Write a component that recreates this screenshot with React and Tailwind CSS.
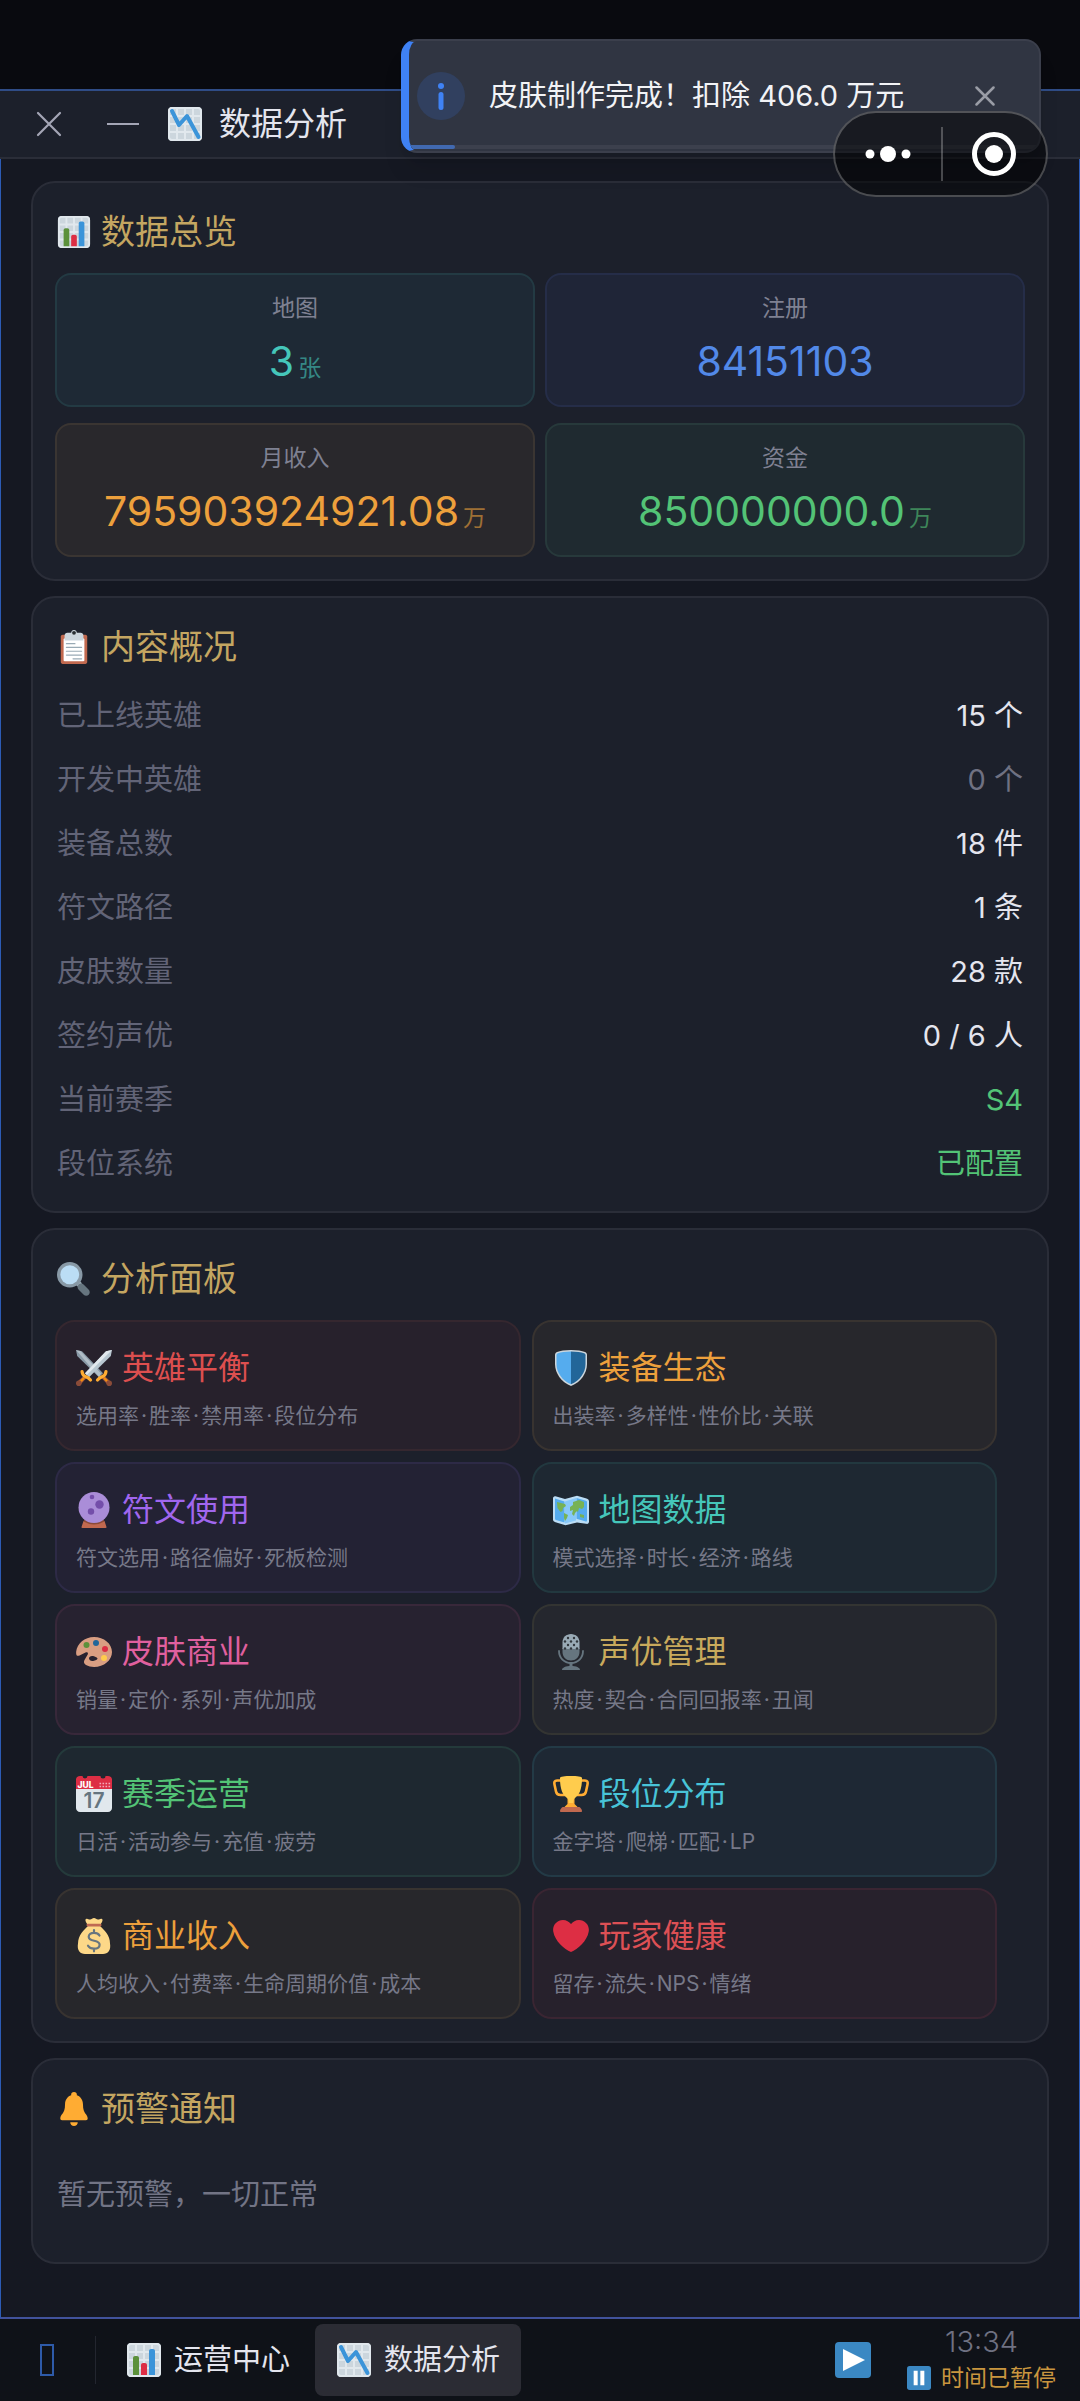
import { Fragment, useState } from 'react'

const GRID =
  'M31 1H5C2.791 1 1 2.791 1 5v26c0 2.209 1.791 4 4 4h26c2.209 0 4-1.791 4-4V5c0-2.209-1.791-4-4-4zm0 2c1.103 0 2 .897 2 2v4h-6V3h4zm-4 16h6v6h-6v-6zm0-2v-6h6v6h-6zM25 3v6h-6V3h6zm-6 8h6v6h-6v-6zm0 8h6v6h-6v-6zM17 3v6h-6V3h6zm-6 8h6v6h-6v-6zm0 8h6v6h-6v-6zM3 5c0-1.103.897-2 2-2h4v6H3V5zm0 6h6v6H3v-6zm0 8h6v6H3v-6zm2 14c-1.103 0-2-.897-2-2v-4h6v6H5zm6 0v-6h6v6h-6zm8 0v-6h6v6h-6zm12 0h-4v-6h6v4c0 1.103-.897 2-2 2z'

// Icon bodies, all on a 36x36 canvas.
const ICONS = {
  bars: (
    <>
      <rect x="1" y="1" width="34" height="34" rx="4" fill="#ccd6dd" />
      <path fill="#e1e8ed" d={GRID} />
      <path fill="#5c913b" d="M13 33H7V16c0-1.104.896-2 2-2h2c1.104 0 2 .896 2 2v17z" />
      <path fill="#3b94d9" d="M29 33h-6V9c0-1.104.896-2 2-2h2c1.104 0 2 .896 2 2v24z" />
      <path fill="#dd2e44" d="M21 33h-6V23c0-1.104.896-2 2-2h2c1.104 0 2 .896 2 2v10z" />
    </>
  ),
  trend: (
    <>
      <rect x="1" y="1" width="34" height="34" rx="4" fill="#ccd6dd" />
      <path fill="#e1e8ed" d={GRID} />
      <path d="M5 5l7 14 8-9 11.500 21" fill="none" stroke="#3b94d9" strokeWidth="4" strokeLinecap="round" strokeLinejoin="round" />
    </>
  ),
  clipboard: (
    <>
      <path fill="#c1694f" d="M32 34c0 1.104-.896 2-2 2H6c-1.104 0-2-.896-2-2V7c0-1.104.896-2 2-2h24c1.104 0 2 .896 2 2v27z" />
      <path fill="#fff" d="M29 32c0 .553-.447 1-1 1H8c-.552 0-1-.447-1-1V10c0-.552.448-1 1-1h20c.553 0 1 .448 1 1v22z" />
      <path fill="#ccd6dd" d="M25 3h-4c0-1.657-1.343-3-3-3s-3 1.343-3 3h-4c-1.657 0-3 1.343-3 3v5h20V6c0-1.657-1.343-3-3-3z" />
      <circle cx="18" cy="3" r="2" fill="#292f33" />
      <path d="M10 14.500h9M10 18.500h16M10 22.500h16M10 26.500h16M17 30.500h9" stroke="#99aab5" strokeWidth="1.300" strokeLinecap="round" />
    </>
  ),
  search: (
    <>
      <path fill="#9aaab4" d="M22.500 26.500l4-4-3.500-3.500-4 4z" />
      <path fill="#66757f" d="M33.600 34.600c-1.500 1.500-4 1.400-5.600-.2l-5-5c-1.600-1.600-1.700-4.100-.2-5.600s4-1.400 5.600.2l5 5c1.600 1.600 1.700 4.100.2 5.600z" />
      <circle cx="13.500" cy="13.500" r="13.500" fill="#8899a6" />
      <circle cx="13.500" cy="13.500" r="10" fill="#bbddf5" />
    </>
  ),
  swords: (
    <>
      <path fill="#8899a6" d="M0 0l6 1.200 21 22-4 4L1.200 6z" />
      <path fill="#ccd6dd" d="M0 0l4.500 1L25 23.500 23 27z" opacity=".6" />
      <path fill="#b7c6d0" d="M36 0l-6 1.200-21 22 4 4L34.800 6z" />
      <path fill="#e1e8ed" d="M36 0l-6 1.200L9 23.200l1.800 1.800z" />
      <path fill="#aa5a3c" d="M8 25.500l2.500 2.500-6 6.500-3-3zM28 25.500L25.500 28l6 6.500 3-3z" />
      <circle cx="2.800" cy="33.200" r="2.800" fill="#8a4b38" />
      <circle cx="33.200" cy="33.200" r="2.800" fill="#8a4b38" />
      <path d="M6 21.500q.5 4 3.500 5t5 3.500M30 21.500q-.5 4-3.500 5t-5 3.500" fill="none" stroke="#ffac33" strokeWidth="3.200" strokeLinecap="round" />
      <path d="M8 28l-3 3M28 28l3 3" stroke="#f4900c" strokeWidth="2" />
    </>
  ),
  shield: (
    <>
      <path fill="#ccd6dd" d="M18 0C12 0 7 .8 4 2 2.600 2.600 2 3.500 2 5v9c0 9 6 18 16 22 10-4 16-13 16-22V5c0-1.500-.6-2.400-2-3-3-1.200-8-2-14-2z" />
      <path fill="#55acee" d="M18 1.500C12 1.500 8 2.200 5 3.300c-1 .4-1.500 1-1.500 2V14c0 8.400 5.500 16.500 14.500 20.300z" />
      <path fill="#226699" d="M18 1.500c6 0 10 .7 13 1.800 1 .4 1.500 1 1.500 2V14c0 8.400-5.500 16.500-14.500 20.300z" />
    </>
  ),
  orb: (
    <>
      <path fill="#c1694f" d="M7.500 29h21l2 6c.2.600-.2 1-1 1h-23c-.8 0-1.200-.4-1-1z" />
      <path fill="#8a4b38" d="M7.500 29.500q10.500 6 21 0l-1-2.500h-19z" />
      <circle cx="18" cy="15.500" r="15.500" fill="#aa8dd8" />
      <circle cx="16" cy="5" r="2.300" fill="#744eaa" />
      <circle cx="23.500" cy="12.500" r="4.200" fill="#744eaa" />
      <circle cx="15" cy="19.500" r="3.200" fill="#744eaa" />
    </>
  ),
  map: (
    <>
      <path fill="#bbddf5" d="M0 6.500C0 5 1 4 2.500 4.300L12 7l12-3.300 9.500 2.800c1.600.5 2.500 1.400 2.500 3v20c0 1.900-1.200 2.800-3 2.300L24 30.500l-11.500 2.800-10-3C1 29.800 0 29 0 27.500z" />
      <path fill="#55acee" d="M2 6.500l9.500 3v21L3 28c-.7-.2-1-.6-1-1.300z" />
      <path fill="#88c9f9" d="M12 9.500L23 6v22.500l-11 3z" />
      <path fill="#55acee" d="M23.500 6L33 8.800c.7.200 1 .6 1 1.300v18.500c0 .8-.4 1.100-1.200.9l-9.300-2.800z" />
      <path fill="#77b255" d="M4 10l8 2 1 2-3 2-.500 3-2 1-3-4zM11 21l4 2-1 3-2 3-1-3zM17 15l3-2v-3l3-1 3-1 5 2v5l-2 2-3-1-1 4-1-1-2 2-1 3-2-2 1-4-3 1zM27 22l4 1v3l-4-1z" />
    </>
  ),
  palette: (
    <>
      <path fill="#d99e82" d="M18 3C8.600 3 1 9.500.2 17.600-.2 21.500 1 22.500 3.500 21.500l6-3c1.700-.7 3 .5 2.200 2l-3.200 5.500c-1 2-.6 3.500 1.500 5 2.300 1.300 5 2 8 2 9.900 0 18-6.700 18-15S27.900 3 18 3zm0 23.700c-2.500 1-5-.4-5-2.400s2.500-3 5-2 3.500 1.500 3.500 2.300-1 1.500-3.500 2.100z" />
      <circle cx="10.500" cy="11" r="3" fill="#5c913b" />
      <circle cx="20" cy="9" r="3" fill="#226699" />
      <circle cx="29" cy="15" r="3" fill="#dd2e44" />
      <circle cx="28" cy="24" r="3" fill="#ffcc4d" />
    </>
  ),
  mic: (
    <>
      <path d="M6 17c0 7 5 12 12 12s12-5 12-12" fill="none" stroke="#66757f" strokeWidth="1.800" strokeLinecap="round" />
      <path fill="#66757f" d="M9.500 14v4c0 5 4 8.500 8.500 8.500s8.500-3.500 8.500-8.500v-4zM16.500 28h3v4h-3zM9 36c0-2.500 4-4 9-4s9 1.500 9 4z" />
      <path fill="#99aab5" d="M18 0c-4.700 0-8.500 3.600-8.500 8v7h17V8c0-4.400-3.800-8-8.500-8z" />
      <g fill="#31373d">
        <circle cx="15" cy="4" r="1.200" /><circle cx="21" cy="4" r="1.200" />
        <circle cx="12" cy="7.500" r="1.200" /><circle cx="18" cy="7.500" r="1.200" /><circle cx="24" cy="7.500" r="1.200" />
        <circle cx="15" cy="11" r="1.200" /><circle cx="21" cy="11" r="1.200" />
        <circle cx="12" cy="14.500" r="1.200" /><circle cx="18" cy="14.500" r="1.200" /><circle cx="24" cy="14.500" r="1.200" />
      </g>
    </>
  ),
  calendar: (
    <>
      <path fill="#e1e8ed" d="M36 32c0 2.209-1.791 4-4 4H4c-2.209 0-4-1.791-4-4V9h36v23z" />
      <path fill="#dd2e44" d="M32 0h-2.500a2.500 2.500 0 0 1-5 0h-13a2.500 2.500 0 0 1-5 0H4C1.800 0 0 1.300 0 3.500V13h36V3.500C36 1.300 34.200 0 32 0z" />
      <path d="M23.500 7.500h12M23.500 10.500h12" stroke="#f4abba" strokeWidth="1.600" strokeDasharray="1.600 1.400" />
      <text x="1.500" y="11.600" fill="#fff" fontSize="8.500" fontWeight="800" fontFamily="Inter">JUL</text>
      <text x="18" y="32" fill="#66757f" fontSize="21" fontWeight="600" fontFamily="Inter" textAnchor="middle">17</text>
    </>
  ),
  trophy: (
    <>
      <path d="M9 4.500H4C1.500 4.500 1 6 1.500 8.500l1.500 7c.5 2.500 2 3.500 4.500 3.500H12M27 4.500h5c2.500 0 3 1.500 2.500 4l-1.500 7c-.5 2.500-2 3.500-4.500 3.500H24" fill="none" stroke="#ffac33" strokeWidth="2.600" />
      <path fill="#ffac33" d="M14.500 22h7v6l4 4h-15l4-4z" />
      <path fill="#ffcc4d" d="M7 2c0-1.400 5-2 11-2s11 .6 11 2c0 12-3 17-7 20-1.500 1.200-1.800 3-1.800 5h-4.400c0-2-.3-3.800-1.800-5C10 19 7 14 7 2z" />
      <path fill="#ffac33" d="M12 31c1-1.500 3.500-2 6-2s5 .5 6 2z" />
      <path fill="#c1694f" d="M10 31h16c1 0 3 2.500 3 4 0 .7-.5 1-1 1H8c-.5 0-1-.3-1-1 0-1.500 2-4 3-4z" />
    </>
  ),
  money: (
    <>
      <path fill="#fdd888" d="M11.500 6.500C9 3 9 1 10.500.7c1.500-.3 2 .8 3.500.8S16.500 0 18 0s2.500 1.500 4 1.500 2-1.100 3.500-.8C27 1 27 3 24.500 6.500z" />
      <path fill="#fdd888" d="M12 8c-4 4-10 9-10 17.500C.8 32 4 36 9 36h18c5 0 8.200-4 7-10.500C34 17 28 12 24 8z" />
      <rect x="10.500" y="5.800" width="15" height="2.600" rx="1.300" fill="#bf6952" />
      <path d="M23.500 17.500c-1-1.800-3-2.700-5.500-2.700-3.200 0-5.300 1.700-5.300 3.900 0 5.600 10.900 2.500 10.900 8 0 2.500-2.400 4-5.600 4-2.700 0-4.900-1.200-6-3M18 12v2.800M18 30.500v2.800" fill="none" stroke="#67757f" strokeWidth="2.200" strokeLinecap="round" />
    </>
  ),
  heart: (
    <path
      fill="#dd2e44"
      d="M35.885 11.833c0-5.450-4.418-9.868-9.867-9.868-3.308 0-6.227 1.633-8.018 4.129-1.791-2.496-4.710-4.129-8.017-4.129-5.450 0-9.868 4.417-9.868 9.868 0 .772.098 1.520.266 2.241C1.751 22.587 11.216 31.568 18 34.034c6.783-2.466 16.249-11.447 17.617-19.959.170-.721.268-1.469.268-2.242z"
    />
  ),
  bell: (
    <>
      <path fill="#ffac33" d="M27.500 13c0 11 5 10 5 15 0 0 0 2-2 2h-25c-2 0-2-2-2-2 0-5 5-4 5-15 0-5.500 4-10 9.500-10s9.500 4.500 9.500 10z" />
      <circle cx="18" cy="3" r="3" fill="#ffac33" />
      <path fill="#ffac33" d="M18 36c2.209 0 4-1.791 4-4h-8c0 2.209 1.791 4 4 4z" />
    </>
  ),
  play: (
    <>
      <rect width="36" height="36" rx="4" fill="#3b88c3" />
      <path fill="#fff" d="M8 7l22 11L8 29z" />
    </>
  ),
  pause: (
    <>
      <rect width="36" height="36" rx="4" fill="#3b88c3" />
      <path fill="#fff" d="M10 7h6v22h-6zM20 7h6v22h-6z" />
    </>
  ),
}

function Icon({ name, className }) {
  return (
    <svg viewBox="0 0 36 36" className={`shrink-0 ${className}`} aria-hidden="true">
      {ICONS[name]}
    </svg>
  )
}

const STATS = [
  { label: '地图', value: '3', unit: '张', box: 'bg-[#1e2935] border-[#233a43]', color: 'text-[#45c6ba]' },
  { label: '注册', value: '84151103', box: 'bg-[#1f2537] border-[#252d48]', color: 'text-[#5289e8]' },
  { label: '月收入', value: '795903924921.08', unit: '万', box: 'bg-[#29282c] border-[#3a3532]', color: 'text-[#eda03c]' },
  { label: '资金', value: '850000000.0', unit: '万', box: 'bg-[#1f2a30] border-[#27393b]', color: 'text-[#53c376]' },
]

const ROWS = [
  ['已上线英雄', '15 个', 'text-[#e4e5ee]'],
  ['开发中英雄', '0 个', 'text-[#6f7182]'],
  ['装备总数', '18 件', 'text-[#e4e5ee]'],
  ['符文路径', '1 条', 'text-[#e4e5ee]'],
  ['皮肤数量', '28 款', 'text-[#e4e5ee]'],
  ['签约声优', '0 / 6 人', 'text-[#e4e5ee]'],
  ['当前赛季', 'S4', 'text-[#53c376]'],
  ['段位系统', '已配置', 'text-[#53c376]'],
]

const PANELS = [
  { icon: 'swords', title: '英雄平衡', desc: '选用率·胜率·禁用率·段位分布', box: 'bg-[#27212c] border-[#35272f]', color: 'text-[#dd4f4f]' },
  { icon: 'shield', title: '装备生态', desc: '出装率·多样性·性价比·关联', box: 'bg-[#27272c] border-[#383330]', color: 'text-[#eda03c]' },
  { icon: 'orb', title: '符文使用', desc: '符文选用·路径偏好·死板检测', box: 'bg-[#232234] border-[#2d2a46]', color: 'text-[#a066ee]' },
  { icon: 'map', title: '地图数据', desc: '模式选择·时长·经济·路线', box: 'bg-[#1e2832] border-[#22383f]', color: 'text-[#45c6ba]' },
  { icon: 'palette', title: '皮肤商业', desc: '销量·定价·系列·声优加成', box: 'bg-[#272230] border-[#38283a]', color: 'text-[#e0609f]' },
  { icon: 'mic', title: '声优管理', desc: '热度·契合·合同回报率·丑闻', box: 'bg-[#25272e] border-[#333432]', color: 'text-[#c9aa5c]' },
  { icon: 'calendar', title: '赛季运营', desc: '日活·活动参与·充值·疲劳', box: 'bg-[#1e2830] border-[#243a3b]', color: 'text-[#53c376]' },
  { icon: 'trophy', title: '段位分布', desc: '金字塔·爬梯·匹配·LP', box: 'bg-[#1e2834] border-[#233a46]', color: 'text-[#48c4d8]' },
  { icon: 'money', title: '商业收入', desc: '人均收入·付费率·生命周期价值·成本', box: 'bg-[#27272b] border-[#383330]', color: 'text-[#eda03c]' },
  { icon: 'heart', title: '玩家健康', desc: '留存·流失·NPS·情绪', box: 'bg-[#27212c] border-[#3a2532]', color: 'text-[#dd5055]' },
]

function Section({ icon, title, children }) {
  return (
    <section className="rounded-3xl border-2 border-[#2a2d38] bg-[#1c202b] p-[22px]">
      <h2 className="flex items-center gap-2.5 px-0.5 text-[34px] leading-[54px] text-[#c4a661]">
        <Icon name={icon} className="size-[34px]" />
        {title}
      </h2>
      {children}
    </section>
  )
}

// Topic list with a little air around each middle dot.
function Topics({ text }) {
  return text.split('·').map((part, i) => (
    <Fragment key={part}>
      {i > 0 && <span className="mx-0.5">·</span>}
      {part}
    </Fragment>
  ))
}

function Toast({ onClose }) {
  return (
    <div
      role="status"
      className="absolute top-[39px] right-[39px] flex h-[114px] w-[640px] items-center overflow-hidden rounded-2xl border-2 border-l-8 border-[#3b3f4c] border-l-[#3f82f5] bg-[#303542] pl-2 shadow-xl"
    >
      <svg viewBox="0 0 48 48" className="size-12 shrink-0" aria-hidden="true">
        <circle cx="24" cy="24" r="24" fill="#31405f" />
        <circle cx="24" cy="14" r="3" fill="#3f82f5" />
        <rect x="21.500" y="20" width="5" height="18" rx="2.500" fill="#3f82f5" />
      </svg>
      <p className="grow pl-6 text-[29px] whitespace-nowrap text-[#f2f3f6]">皮肤制作完成！扣除 406.0 万元</p>
      <button type="button" aria-label="关闭通知" onClick={onClose} className="mr-11 shrink-0 text-[#999ca5]">
        <svg viewBox="0 0 20 20" className="size-5" fill="none" stroke="currentColor" strokeWidth="2.500" strokeLinecap="round">
          <path d="M1.500 1.500l17 17M18.500 1.500l-17 17" />
        </svg>
      </button>
      <div className="absolute inset-x-0 bottom-0.5 h-1 bg-[#3c404d]">
        <div className="h-full w-[46px] rounded-r bg-[#4169b0]" />
      </div>
    </div>
  )
}

// Host app capsule: menu dots on the left, exit target on the right.
function Capsule() {
  return (
    <div className="absolute top-[111px] right-8 flex h-[86px] w-[215px] items-center rounded-full border-2 border-white/25 bg-black/50">
      <button type="button" aria-label="更多" className="flex grow justify-center">
        <svg viewBox="0 0 46 18" className="h-[18px] w-[46px]" fill="#fff">
          <circle cx="5" cy="9" r="4.500" />
          <circle cx="23" cy="9" r="8" />
          <circle cx="41" cy="9" r="4.500" />
        </svg>
      </button>
      <span className="h-[54px] w-0.5 bg-white/25" />
      <button type="button" aria-label="退出" className="flex grow justify-center">
        <svg viewBox="0 0 44 44" className="size-11">
          <circle cx="22" cy="22" r="19.500" fill="none" stroke="#fff" strokeWidth="5" />
          <circle cx="22" cy="22" r="9" fill="#fff" />
        </svg>
      </button>
    </div>
  )
}

export default function App() {
  const [toast, setToast] = useState(true)

  return (
    <div className="relative flex min-h-screen flex-col bg-[#090a0f] pt-[89px] font-['Inter','Noto_Sans_CJK_SC',sans-serif] text-[#e4e5ee]">
      <header className="flex items-center border-y-2 border-t-[#2f4c86] border-b-[#2a2d38] bg-[#1c202b] py-[15px] pl-9">
        <button type="button" aria-label="关闭" className="text-[#a4a6b6]">
          <svg viewBox="0 0 26 26" className="size-[26px]" fill="none" stroke="currentColor" strokeWidth="2.200" strokeLinecap="round">
            <path d="M2 2l22 22M24 2L2 24" />
          </svg>
        </button>
        <button type="button" aria-label="最小化" className="ml-11 text-[#a4a6b6]">
          <svg viewBox="0 0 34 26" className="h-[26px] w-[34px]" stroke="currentColor" strokeWidth="2">
            <path d="M1 13h32" />
          </svg>
        </button>
        <Icon name="trend" className="ml-[27px] size-9" />
        <h1 className="ml-4 text-[32px] leading-9">数据分析</h1>
      </header>

      <main className="flex grow flex-col gap-[15px] border-x border-b-2 border-x-[#2c5bb5] border-b-[#41529c] bg-[#151822] px-[30px] pt-[22px] pb-[52px]">
        <Section icon="bars" title="数据总览">
          <div className="mt-3.5 grid grid-cols-2 gap-x-2.5 gap-y-4">
            {STATS.map((s) => (
              <div key={s.label} className={`rounded-2xl border-2 pt-4 pb-[18px] text-center ${s.box}`}>
                <div className="text-[23px] leading-[34px] text-[#7f8192]">{s.label}</div>
                <div className={`mt-2.5 flex h-[52px] items-baseline justify-center gap-1 text-[41px] leading-[52px] ${s.color}`}>
                  <span>{s.value}</span>
                  {s.unit && <span className="text-[23px] leading-none opacity-60">{s.unit}</span>}
                </div>
              </div>
            ))}
          </div>
        </Section>

        <Section icon="clipboard" title="内容概况">
          <dl className="mt-2.5 -mb-[7px] px-0.5 text-[29px]">
            {ROWS.map(([label, value, color]) => (
              <div key={label} className="flex h-16 items-center justify-between">
                <dt className="text-[#626477]">{label}</dt>
                <dd className={color}>{value}</dd>
              </div>
            ))}
          </dl>
        </Section>

        <Section icon="search" title="分析面板">
          <div className="mt-3.5 flex flex-wrap gap-[11px]">
            {PANELS.map((p) => (
              <button type="button" key={p.title} className={`w-[48%] rounded-[20px] border-2 px-[19px] pt-6 pb-[18px] text-left ${p.box}`}>
                <span className={`flex items-center gap-2.5 text-[32px] leading-[44px] ${p.color}`}>
                  <Icon name={p.icon} className="size-9" />
                  {p.title}
                </span>
                <span className="mt-[11px] block text-[21px] leading-[30px] text-[#767888]">
                  <Topics text={p.desc} />
                </span>
              </button>
            ))}
          </div>
        </Section>

        <Section icon="bell" title="预警通知">
          <p className="mt-[41px] px-0.5 pb-[27px] text-[29px] leading-9 text-[#727485]">暂无预警，一切正常</p>
        </Section>
      </main>

      <footer className="flex items-center bg-[#0f1218] py-[5px] pr-6 pl-10">
        <button type="button" aria-label="开始" className="h-8 w-3.5 border-2 border-[#2e5aa8]" />
        <span className="mx-[41px] h-12 w-px bg-[#23262f]" />
        <nav className="-ml-8 flex gap-1">
          <button type="button" className="flex h-[72px] items-center gap-3 rounded-lg px-[21px] text-[29px]">
            <Icon name="bars" className="size-9" />
            运营中心
          </button>
          <button type="button" aria-current="page" className="flex h-[72px] items-center gap-3 rounded-lg bg-[#2b2c34] px-[21px] text-[29px]">
            <Icon name="trend" className="size-9" />
            数据分析
          </button>
        </nav>
        <button type="button" aria-label="继续" className="ml-auto">
          <Icon name="play" className="size-9" />
        </button>
        <div className="ml-9 flex flex-col items-center">
          <time className="text-[29px] leading-9 font-light text-[#6f7182]">13:34</time>
          <span className="flex items-center gap-2.5 text-[23px] leading-9 text-[#c9963f]">
            <Icon name="pause" className="size-6" />
            时间已暂停
          </span>
        </div>
      </footer>

      {toast && <Toast onClose={() => setToast(false)} />}
      <Capsule />
    </div>
  )
}
